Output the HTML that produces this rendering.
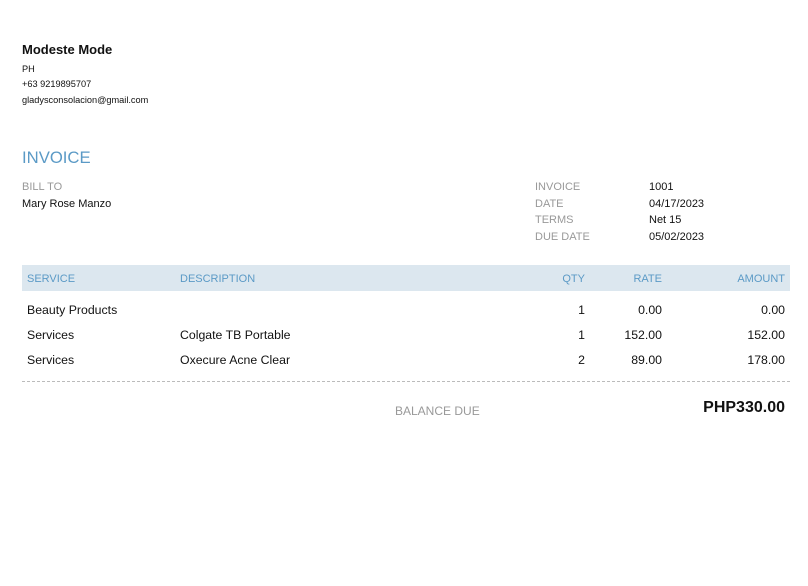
<!DOCTYPE html>
<html><head><meta charset="utf-8"><style>
body{margin:0;width:808px;height:586px;background:#fff;font-family:"Liberation Sans",sans-serif;color:#111;position:relative;overflow:hidden}
.a{position:absolute;white-space:nowrap;line-height:1}
.g{color:#999}
.b{color:#5b9ac6}
.r{text-align:right}
</style></head><body>
<div class="a" style="left:22px;top:43px;font-size:13px;font-weight:bold">Modeste Mode</div>
<div class="a" style="left:22px;top:65px;font-size:9.2px">PH</div>
<div class="a" style="left:22px;top:80px;font-size:9.2px">+63 9219895707</div>
<div class="a" style="left:22px;top:96px;font-size:9.2px">gladysconsolacion@gmail.com</div>
<div class="a b" style="left:22px;top:150px;font-size:16.7px">INVOICE</div>
<div class="a g" style="left:22px;top:182px;font-size:11px">BILL TO</div>
<div class="a" style="left:22px;top:199px;font-size:11px">Mary Rose Manzo</div>
<div class="a g" style="left:535px;top:182px;font-size:11px">INVOICE</div>
<div class="a g" style="left:535px;top:199px;font-size:11px">DATE</div>
<div class="a g" style="left:535px;top:215px;font-size:11px">TERMS</div>
<div class="a g" style="left:535px;top:232px;font-size:11px">DUE DATE</div>
<div class="a" style="left:649px;top:182px;font-size:11px">1001</div>
<div class="a" style="left:649px;top:199px;font-size:11px">04/17/2023</div>
<div class="a" style="left:649px;top:215px;font-size:11px">Net 15</div>
<div class="a" style="left:649px;top:232px;font-size:11px">05/02/2023</div>
<div class="a" style="left:22px;top:265px;width:768px;height:26px;background:#dce7ef"></div>
<div class="a b" style="left:27px;top:274px;font-size:11px">SERVICE</div>
<div class="a b" style="left:180px;top:274px;font-size:11px">DESCRIPTION</div>
<div class="a b r" style="left:500px;width:85px;top:274px;font-size:11px">QTY</div>
<div class="a b r" style="left:560px;width:102px;top:274px;font-size:11px">RATE</div>
<div class="a b r" style="left:660px;width:125px;top:274px;font-size:11px">AMOUNT</div>

<div class="a" style="left:27px;top:304px;font-size:12.3px">Beauty Products</div>
<div class="a r" style="left:500px;width:85px;top:304px;font-size:12.3px">1</div>
<div class="a r" style="left:560px;width:102px;top:304px;font-size:12.3px">0.00</div>
<div class="a r" style="left:660px;width:125px;top:304px;font-size:12.3px">0.00</div>

<div class="a" style="left:27px;top:329px;font-size:12.3px">Services</div>
<div class="a" style="left:180px;top:329px;font-size:12.3px">Colgate TB Portable</div>
<div class="a r" style="left:500px;width:85px;top:329px;font-size:12.3px">1</div>
<div class="a r" style="left:560px;width:102px;top:329px;font-size:12.3px">152.00</div>
<div class="a r" style="left:660px;width:125px;top:329px;font-size:12.3px">152.00</div>

<div class="a" style="left:27px;top:354px;font-size:12.3px">Services</div>
<div class="a" style="left:180px;top:354px;font-size:12.3px">Oxecure Acne Clear</div>
<div class="a r" style="left:500px;width:85px;top:354px;font-size:12.3px">2</div>
<div class="a r" style="left:560px;width:102px;top:354px;font-size:12.3px">89.00</div>
<div class="a r" style="left:660px;width:125px;top:354px;font-size:12.3px">178.00</div>

<div class="a" style="left:22px;top:381px;width:768px;border-top:1px dashed #bbb"></div>
<div class="a g" style="left:395px;top:405px;font-size:12px">BALANCE DUE</div>
<div class="a r" style="left:600px;width:185px;top:400px;font-size:16px;font-weight:bold">PHP330.00</div>
</body></html>
